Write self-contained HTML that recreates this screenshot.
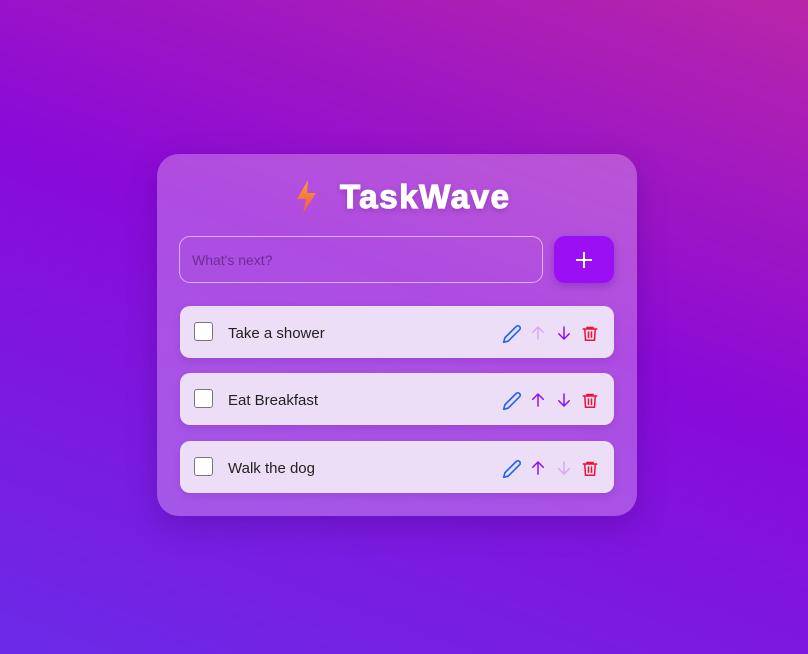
<!DOCTYPE html>
<html><head><style>
*{margin:0;padding:0;box-sizing:border-box}
body{width:808px;height:654px;overflow:hidden;font-family:"Liberation Sans",sans-serif;
background:linear-gradient(200deg,#b826a8 0%,#8a0ad8 45%,#6c2ae8 100%);position:relative}
.card{position:absolute;left:157px;top:154px;width:480px;height:362px;border-radius:22px;
background:rgba(225,170,240,0.42);box-shadow:0 10px 30px rgba(60,0,120,0.3)}
.title{position:absolute;left:0;top:178px;width:808px;text-align:center;}
.title span{position:absolute;left:340px;top:0;font-size:33px;font-weight:900;color:#fff;letter-spacing:1.6px;text-shadow:0 2px 6px rgba(80,0,120,0.35);-webkit-text-stroke:1.2px #fff}
.bolt{position:absolute;left:296px;top:180px}
.input{position:absolute;left:179px;top:236px;width:364px;height:47px;border:1px solid rgba(255,255,255,0.55);border-radius:11px;color:rgba(80,30,110,0.7);font-size:14px;padding:15px 12px}
.add{position:absolute;left:554px;top:236px;width:60px;height:47px;border-radius:11px;background:#9b0ff5;box-shadow:0 3px 8px rgba(80,0,150,0.3)}
.row{position:absolute;left:180px;width:434px;height:52px;border-radius:10px;background:#ecdef6;box-shadow:0 3px 8px rgba(80,0,140,0.15)}
.cb{position:absolute;left:14px;top:16px;width:19px;height:19px;border:1.5px solid #777;border-radius:3px;background:#fff}
.txt{position:absolute;left:48px;top:19px;font-size:15px;color:#222}
.ic{position:absolute;top:18px}
</style></head><body>
<div class="card"></div>
<svg class="bolt" width="22" height="33" viewBox="0 0 22 33"><defs><linearGradient id="g" x1="0" y1="0" x2="0" y2="1"><stop offset="0" stop-color="#f9a03a"/><stop offset="1" stop-color="#f05a3a"/></linearGradient></defs><path d="M12 0 L1 19 H10 L7 33 L20 13 H11 Z" fill="url(#g)"/></svg>
<div class="title"><span>TaskWave</span></div>
<div class="input">What's next?</div>
<div class="add"><svg width="60" height="47"><path d="M30 16v16M22 24h16" stroke="#fff" stroke-width="2"/></svg></div>

<div class="row" style="top:306px"><div class="cb"></div><div class="txt">Take a shower</div>
<svg class="ic" style="left:322px" width="20" height="20" viewBox="0 0 24 24" fill="none" stroke="#2266ee" stroke-width="2" stroke-linecap="round" stroke-linejoin="round"><path d="M17 3a2.8 2.8 0 0 1 4 4L7.5 20.5 2 22l1.5-5.5Z"/></svg>
<svg class="ic" style="left:349px" width="18" height="18" viewBox="0 0 24 24" fill="none" stroke="#d9a6f5" stroke-width="2" stroke-linecap="round"><path d="M12 20V4M5 11l7-7 7 7"/></svg>
<svg class="ic" style="left:375px" width="18" height="18" viewBox="0 0 24 24" fill="none" stroke="#9010f0" stroke-width="2" stroke-linecap="round"><path d="M12 4v16M5 13l7 7 7-7"/></svg>
<svg class="ic" style="left:401px" width="18" height="19" viewBox="0 0 24 24" fill="none" stroke="#ee1133" stroke-width="2" stroke-linecap="round"><path d="M3 6h18M8 6V4h8v2M5 6l1 15h12l1-15M10 10v7M14 10v7"/></svg></div>

<div class="row" style="top:373px"><div class="cb"></div><div class="txt">Eat Breakfast</div>
<svg class="ic" style="left:322px" width="20" height="20" viewBox="0 0 24 24" fill="none" stroke="#2266ee" stroke-width="2" stroke-linecap="round" stroke-linejoin="round"><path d="M17 3a2.8 2.8 0 0 1 4 4L7.5 20.5 2 22l1.5-5.5Z"/></svg>
<svg class="ic" style="left:349px" width="18" height="18" viewBox="0 0 24 24" fill="none" stroke="#9010f0" stroke-width="2" stroke-linecap="round"><path d="M12 20V4M5 11l7-7 7 7"/></svg>
<svg class="ic" style="left:375px" width="18" height="18" viewBox="0 0 24 24" fill="none" stroke="#9010f0" stroke-width="2" stroke-linecap="round"><path d="M12 4v16M5 13l7 7 7-7"/></svg>
<svg class="ic" style="left:401px" width="18" height="19" viewBox="0 0 24 24" fill="none" stroke="#ee1133" stroke-width="2" stroke-linecap="round"><path d="M3 6h18M8 6V4h8v2M5 6l1 15h12l1-15M10 10v7M14 10v7"/></svg></div>

<div class="row" style="top:441px"><div class="cb"></div><div class="txt">Walk the dog</div>
<svg class="ic" style="left:322px" width="20" height="20" viewBox="0 0 24 24" fill="none" stroke="#2266ee" stroke-width="2" stroke-linecap="round" stroke-linejoin="round"><path d="M17 3a2.8 2.8 0 0 1 4 4L7.5 20.5 2 22l1.5-5.5Z"/></svg>
<svg class="ic" style="left:349px" width="18" height="18" viewBox="0 0 24 24" fill="none" stroke="#9010f0" stroke-width="2" stroke-linecap="round"><path d="M12 20V4M5 11l7-7 7 7"/></svg>
<svg class="ic" style="left:375px" width="18" height="18" viewBox="0 0 24 24" fill="none" stroke="#d9a6f5" stroke-width="2" stroke-linecap="round"><path d="M12 4v16M5 13l7 7 7-7"/></svg>
<svg class="ic" style="left:401px" width="18" height="19" viewBox="0 0 24 24" fill="none" stroke="#ee1133" stroke-width="2" stroke-linecap="round"><path d="M3 6h18M8 6V4h8v2M5 6l1 15h12l1-15M10 10v7M14 10v7"/></svg></div>
</body></html>
